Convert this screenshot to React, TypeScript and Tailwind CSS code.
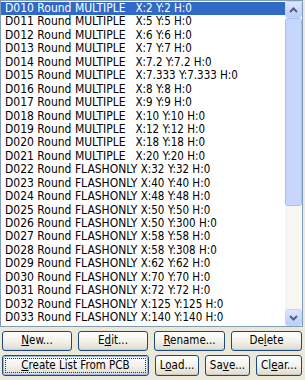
import React from "react";

const rows: [string, string][] = [
  ["D010 Round MULTIPLE", "X:2 Y:2 H:0"],
  ["D011 Round MULTIPLE", "X:5 Y:5 H:0"],
  ["D012 Round MULTIPLE", "X:6 Y:6 H:0"],
  ["D013 Round MULTIPLE", "X:7 Y:7 H:0"],
  ["D014 Round MULTIPLE", "X:7.2 Y:7.2 H:0"],
  ["D015 Round MULTIPLE", "X:7.333 Y:7.333 H:0"],
  ["D016 Round MULTIPLE", "X:8 Y:8 H:0"],
  ["D017 Round MULTIPLE", "X:9 Y:9 H:0"],
  ["D018 Round MULTIPLE", "X:10 Y:10 H:0"],
  ["D019 Round MULTIPLE", "X:12 Y:12 H:0"],
  ["D020 Round MULTIPLE", "X:18 Y:18 H:0"],
  ["D021 Round MULTIPLE", "X:20 Y:20 H:0"],
  ["D022 Round FLASHONLY", "X:32 Y:32 H:0"],
  ["D023 Round FLASHONLY", "X:40 Y:40 H:0"],
  ["D024 Round FLASHONLY", "X:48 Y:48 H:0"],
  ["D025 Round FLASHONLY", "X:50 Y:50 H:0"],
  ["D026 Round FLASHONLY", "X:50 Y:300 H:0"],
  ["D027 Round FLASHONLY", "X:58 Y:58 H:0"],
  ["D028 Round FLASHONLY", "X:58 Y:308 H:0"],
  ["D029 Round FLASHONLY", "X:62 Y:62 H:0"],
  ["D030 Round FLASHONLY", "X:70 Y:70 H:0"],
  ["D031 Round FLASHONLY", "X:72 Y:72 H:0"],
  ["D032 Round FLASHONLY", "X:125 Y:125 H:0"],
  ["D033 Round FLASHONLY", "X:140 Y:140 H:0"],
];

function Btn({
  pre,
  u,
  post,
  focus,
  className = "",
}: {
  pre: string;
  u: string;
  post: string;
  focus?: boolean;
  className?: string;
}) {
  return (
    <div
      className={
        "flex items-center justify-center rounded-[3px] border border-[#1c4a80] bg-gradient-to-b from-[#ffffff] via-[#f3f2ec] to-[#dedbcd] text-black shadow-[inset_0_-1px_0_#d0c9bc] " +
        className
      }
    >
      <div
        className={
          "flex h-full w-full items-center justify-center rounded-[2px] " +
          (focus ? "border border-[#9bb6e6] outline outline-1 outline-dotted outline-[#333] -outline-offset-[3px]" : "")
        }
      >
        <span className="whitespace-pre">
          {pre}
          <span className="underline underline-offset-[1px]">{u}</span>
          {post}
        </span>
      </div>
    </div>
  );
}

function Chevron({ up }: { up?: boolean }) {
  return (
    <svg width="9" height="6" viewBox="0 0 9 6">
      <path
        d={up ? "M1 5 L4.5 1.5 L8 5" : "M1 1 L4.5 4.5 L8 1"}
        fill="none"
        stroke="#4d6185"
        strokeWidth="2"
      />
    </svg>
  );
}

export default function App() {
  return (
    <div
      className="flex h-[380px] w-[305px] flex-col bg-[#ece9d8] text-[11.5px] text-black"
      style={{ fontFamily: '"DejaVu Sans Condensed", "DejaVu Sans", sans-serif', fontStretch: "condensed" }}
    >
      <div className="flex h-[327px] w-[303px] border border-[#7f9db9] bg-white">
        <div className="flex-1 overflow-hidden pt-[1px]">
          {rows.map(([a, b], i) => (
            <div
              key={i}
              className={
                "h-[13.45px] whitespace-pre pl-[4px] leading-[13.45px] " +
                (i === 0 ? "bg-[#316ac5] text-white" : "")
              }
            >
              <span className="text-[12px]">{a}</span>
              {a.endsWith("MULTIPLE") ? "   " : " "}
              {b}
            </div>
          ))}
        </div>
        <div className="flex w-[17px] flex-col bg-[#f7f6f1]">
          <div className="flex h-[17px] items-center justify-center rounded-[3px] border border-[#c3d3fd] bg-gradient-to-b from-[#dde7fe] to-[#b9cdfb]">
            <Chevron up />
          </div>
          <div className="h-[188px] rounded-[3px] border border-[#a9bff4] bg-[#c6d6fc]" />
          <div className="flex-1" />
          <div className="flex h-[17px] items-center justify-center rounded-[3px] border border-[#c3d3fd] bg-gradient-to-b from-[#dde7fe] to-[#b9cdfb]">
            <Chevron />
          </div>
        </div>
      </div>
      <div className="mt-[4px] flex h-[20px] gap-[6px] pl-[2px] pr-[2px]">
        <Btn className="w-[70px]" pre="" u="N" post="ew..." />
        <Btn className="w-[70px]" pre="E" u="d" post="it..." />
        <Btn className="w-[71px]" pre="" u="R" post="ename..." />
        <Btn className="w-[71px]" pre="De" u="l" post="ete" />
      </div>
      <div className="mt-[4px] flex h-[21px] gap-[6px] pl-[2px] pr-[2px]">
        <Btn className="w-[147px]" focus pre="" u="C" post="reate List From PCB" />
        <Btn className="w-[44px]" pre="L" u="o" post="ad..." />
        <Btn className="w-[45px]" pre="Sa" u="v" post="e..." />
        <Btn className="w-[46px]" pre="Cl" u="e" post="ar..." />
      </div>
    </div>
  );
}
